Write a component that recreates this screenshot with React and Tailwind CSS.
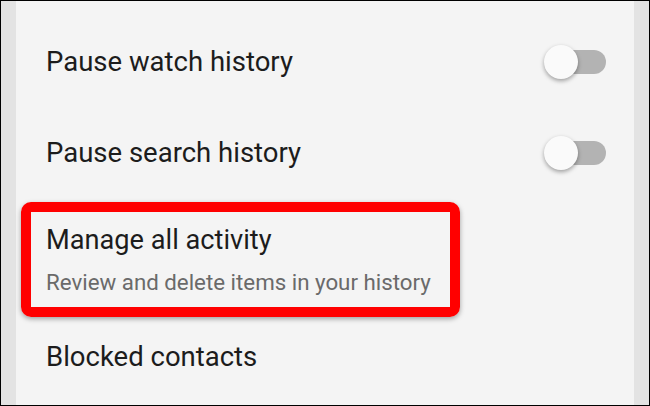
import React from 'react';

function Toggle() {
  return (
    <div className="relative h-[34px] w-[62px] shrink-0">
      <div className="absolute right-0 top-[5px] h-[24px] w-[52px] rounded-full bg-[#b3b3b3]" />
      <div className="absolute left-0 top-0 h-[34px] w-[34px] rounded-full bg-[#fafafa] shadow-[0_2px_4px_rgba(0,0,0,0.35)]" />
    </div>
  );
}

function ToggleRow({ label, className }) {
  return (
    <div className={`flex items-center justify-between pl-[30px] pr-[28px] ${className}`}>
      <span className="text-[27.5px] leading-[30px] text-[#1c1c1c]">{label}</span>
      <Toggle />
    </div>
  );
}

export default function App() {
  return (
    <div
      className="flex h-[406px] w-[650px] border border-black bg-[#e3e3e3] pl-[15px] pr-[15px]"
      style={{ fontFamily: 'Roboto, "Liberation Sans", sans-serif' }}
    >
      <div className="flex flex-1 flex-col bg-[#f4f4f4] pt-[14px]">
        <ToggleRow label="Pause watch history" className="h-[94px]" />
        <ToggleRow label="Pause search history" className="h-[88px]" />

        <div className="ml-[5px] mt-[5px] h-[115px] w-[439px] rounded-[10px] border-[10px] border-[#ff0000] pl-[15px] pt-[13px] shadow-[0_2px_5px_rgba(0,0,0,0.35)]">
          <div className="text-[27.2px] leading-[30px] text-[#1c1c1c]">Manage all activity</div>
          <div className="mt-[14px] text-[22.3px] leading-[26px] text-[#6a6a6a]">
            Review and delete items in your history
          </div>
        </div>

        <div className="mt-[25px] pl-[30px] text-[27.5px] leading-[30px] text-[#1c1c1c]">Blocked contacts</div>
      </div>
    </div>
  );
}
